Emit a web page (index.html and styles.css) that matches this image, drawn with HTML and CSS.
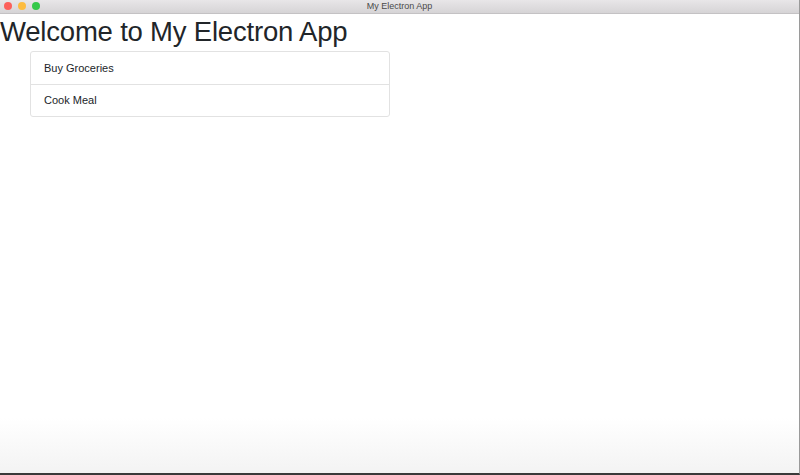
FILE: index.html
```html
<!DOCTYPE html>
<html>
<head>
<meta charset="utf-8">
<link rel="stylesheet" href="styles.css">
</head>
<body>
<div class="window">
  <div class="titlebar">
    <div class="lights">
      <span class="light red"></span>
      <span class="light yellow"></span>
      <span class="light green"></span>
    </div>
    <div class="title">My Electron App</div>
  </div>
  <div class="content">
    <h1 class="heading">Welcome to My Electron App</h1>
    <ul class="list">
      <li class="item">Buy Groceries</li>
      <li class="item">Cook Meal</li>
    </ul>
  </div>
</div>
</body>
</html>
```
FILE: styles.css
```css
html, body {
  margin: 0;
  padding: 0;
  width: 800px;
  height: 475px;
  overflow: hidden;
  background: #fff;
  font-family: "Liberation Sans", Arial, sans-serif;
}
.window {
  width: 800px;
  height: 475px;
  display: flex;
  flex-direction: column;
  box-sizing: border-box;
  border-bottom: 2px solid #3a3a3a;
  border-right: 1px solid #9a9a9a;
}
.titlebar {
  height: 13px;
  flex: none;
  position: relative;
  background: linear-gradient(#e8e6e8, #d6d4d6);
  border-bottom: 1px solid #c4c2c4;
  display: flex;
  align-items: center;
  justify-content: center;
}
.lights {
  position: absolute;
  left: 4px;
  top: 2px;
  display: flex;
  gap: 6px;
}
.light {
  width: 8px;
  height: 8px;
  border-radius: 50%;
  display: block;
}
.red { background: #fc605b; }
.yellow { background: #fdbc40; }
.green { background: #34c84a; }
.title {
  font-size: 9px;
  color: #4a4a4a;
  line-height: 13px;
}
.content {
  flex: 1;
  background: linear-gradient(#fff 88%, #f3f3f3);
}
.heading {
  margin: 0;
  font-weight: normal;
  font-size: 27.5px;
  line-height: 36px;
  color: #212529;
  letter-spacing: -0.2px;
}
.list {
  list-style: none;
  margin: 1px 0 0 30px;
  padding: 0;
  width: 360px;
  border: 1px solid #e2e2e2;
  border-radius: 3px;
  box-sizing: border-box;
}
.item {
  height: 32px;
  line-height: 32px;
  padding-left: 13px;
  font-size: 11px;
  color: #212529;
}
.item + .item {
  height: 31px;
  line-height: 31px;
  border-top: 1px solid #e2e2e2;
}
```
